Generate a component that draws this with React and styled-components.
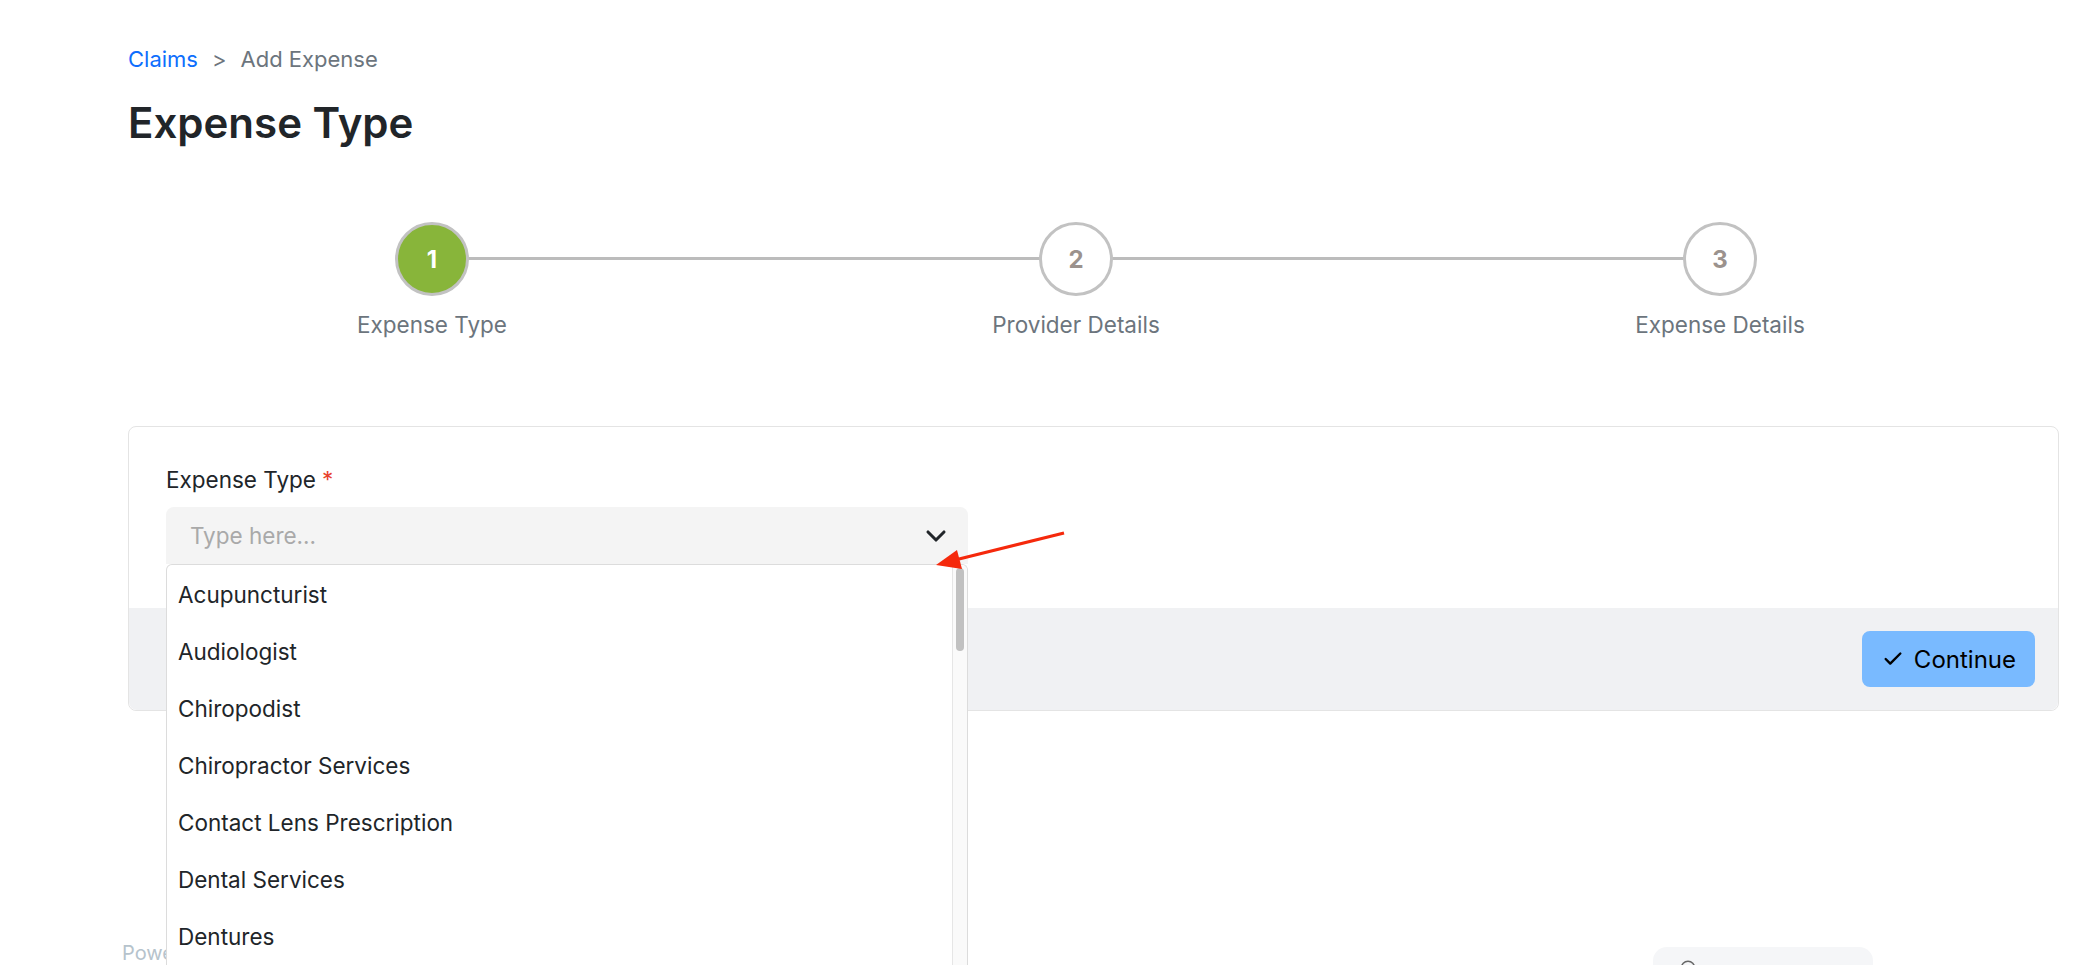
import React from "react";
import styled, { createGlobalStyle } from "styled-components";
import { Check, ChevronDown } from "lucide-react";

const GlobalStyle = createGlobalStyle`
  html, body {
    margin: 0;
    padding: 0;
    overflow: hidden;
    background: #fff;
  }
  body {
    font-family: Inter, "Noto Sans", sans-serif;
    color: #212529;
  }
  * {
    box-sizing: border-box;
  }
`;

const Page = styled.main`
  padding: 46px 36px 0 128px;
`;

const Breadcrumb = styled.nav`
  display: flex;
  align-items: center;
  gap: 14px;
  font-size: 22px;
  line-height: 26px;
  color: #6c757d;
`;

const Crumb = styled.a`
  color: #0d6efd;
  text-decoration: none;
`;

const Title = styled.h1`
  margin: 24px 0 0;
  font-size: 42px;
  line-height: 53px;
  font-weight: 600;
  color: #212529;
`;

const Stepper = styled.ol`
  list-style: none;
  margin: 73px 0 0 -18px;
  padding: 0;
  display: grid;
  grid-template-columns: repeat(3, 644px);
`;

const Step = styled.li`
  position: relative;
  display: flex;
  flex-direction: column;
  align-items: center;

  /* connector line to the next step */
  &:not(:last-child)::after {
    content: "";
    position: absolute;
    top: 35px;
    left: 50%;
    width: 100%;
    height: 3px;
    background: #bcbcbc;
    z-index: 0;
  }
`;

const Circle = styled.span`
  position: relative;
  z-index: 1;
  width: 74px;
  height: 74px;
  border-radius: 50%;
  border: 3px solid #c2c2c2;
  background: ${(p) => (p.$active ? "#88b53a" : "#fff")};
  color: ${(p) => (p.$active ? "#fff" : "#9b928d")};
  display: flex;
  align-items: center;
  justify-content: center;
  font-size: 24px;
  font-weight: 700;
`;

const StepLabel = styled.span`
  margin-top: 16px;
  font-size: 22.5px;
  line-height: 26px;
  color: #6c757d;
`;

const Card = styled.section`
  position: relative;
  margin-top: 88px;
  border: 1px solid #e4e4e4;
  border-radius: 8px;
  background: #fff;
`;

const CardBody = styled.div`
  padding: 39px 37px 44px;
`;

const Label = styled.label`
  display: block;
  font-size: 22.5px;
  line-height: 27px;
  color: #212529;
`;

const Required = styled.span`
  color: #e8412c;
  margin-left: 6px;
`;

const Field = styled.div`
  position: relative;
  width: 802px;
  margin-top: 14px;
`;

const Input = styled.input`
  display: block;
  width: 100%;
  height: 57px;
  border: none;
  border-radius: 8px 8px 0 0;
  background: #f4f4f4;
  padding: 0 60px 0 24px;
  font-family: inherit;
  font-size: 22.5px;
  color: #212529;
  outline: none;

  &::placeholder {
    color: #a9a9a9;
  }
`;

const Chevron = styled.span`
  position: absolute;
  right: 16px;
  top: 13px;
  display: flex;
  color: #212529;
`;

const Dropdown = styled.div`
  position: absolute;
  top: 100%;
  left: 0;
  width: 100%;
  height: 440px;
  z-index: 5;
  display: flex;
  background: #fff;
  border: 1px solid #dcdcdc;
  border-bottom: none;
  border-radius: 6px 6px 0 0;
  overflow: hidden;
`;

const OptionList = styled.ul`
  flex: 1;
  list-style: none;
  margin: 0;
  padding: 1px 0 0;
`;

const Option = styled.li`
  height: 57px;
  display: flex;
  align-items: center;
  padding-left: 11px;
  font-size: 22.5px;
  color: #212529;
`;

const ScrollTrack = styled.div`
  width: 15px;
  border-left: 1px solid #e6e6e6;
  background: #fafafa;
  padding: 3px 3px 0 3px;
`;

const ScrollThumb = styled.div`
  height: 83px;
  border-radius: 4px;
  background: #c1c1c1;
`;

const CardFooter = styled.div`
  display: flex;
  justify-content: flex-end;
  padding: 23px 23px 23px;
  background: #f0f1f3;
  border-radius: 0 0 8px 8px;
`;

const Button = styled.button`
  display: flex;
  align-items: center;
  gap: 10px;
  height: 56px;
  padding: 0 19px 0 20px;
  border: none;
  border-radius: 8px;
  background: #79baff;
  color: #000;
  font-family: inherit;
  font-size: 24px;
`;

const Annotation = styled.svg`
  position: absolute;
  left: 802px;
  top: 102px;
  z-index: 6;
  overflow: visible;
`;

const PageFooter = styled.footer`
  display: flex;
  justify-content: space-between;
  align-items: flex-start;
  margin: 230px 186px 0 -6px;
`;

const Powered = styled.span`
  font-size: 20px;
  line-height: 24px;
  color: #b6c3cc;
`;

const Widget = styled.div`
  margin-top: 6px;
  width: 220px;
  height: 50px;
  border-radius: 14px;
  background: #f5f6f8;
  padding: 12px 0 0 26px;
  color: #666;
`;

const options = [
  "Acupuncturist",
  "Audiologist",
  "Chiropodist",
  "Chiropractor Services",
  "Contact Lens Prescription",
  "Dental Services",
  "Dentures",
  "Dermatologist",
];

const steps = ["Expense Type", "Provider Details", "Expense Details"];

export default function App() {
  return (
    <>
      <GlobalStyle />
      <Page>
        <Breadcrumb>
          <Crumb href="#">Claims</Crumb>
          <span>&gt;</span>
          <span>Add Expense</span>
        </Breadcrumb>
        <Title>Expense Type</Title>

        <Stepper>
          {steps.map((s, i) => (
            <Step key={s}>
              <Circle $active={i === 0}>{i + 1}</Circle>
              <StepLabel>{s}</StepLabel>
            </Step>
          ))}
        </Stepper>

        <Card>
          <CardBody>
            <Label>
              Expense Type<Required>*</Required>
            </Label>
            <Field>
              <Input placeholder="Type here..." />
              <Chevron>
                <ChevronDown size={32} strokeWidth={2.3} />
              </Chevron>
              <Dropdown>
                <OptionList>
                  {options.map((o) => (
                    <Option key={o}>{o}</Option>
                  ))}
                </OptionList>
                <ScrollTrack>
                  <ScrollThumb />
                </ScrollTrack>
              </Dropdown>
            </Field>
          </CardBody>
          <CardFooter>
            <Button>
              <Check size={22} strokeWidth={2.6} />
              Continue
            </Button>
          </CardFooter>
          <Annotation width="136" height="44" viewBox="0 0 136 44">
            <line x1="133" y1="4" x2="24" y2="31" stroke="#f5290c" strokeWidth="3.2" />
            <polygon points="5,36 26,21 31,40" fill="#f5290c" />
          </Annotation>
        </Card>

        <PageFooter>
          <Powered>Powered by Claims</Powered>
          <Widget>
            <svg width="18" height="18" viewBox="0 0 24 24" fill="none" stroke="currentColor" strokeWidth="2">
              <circle cx="12" cy="12" r="9" />
            </svg>
          </Widget>
        </PageFooter>
      </Page>
    </>
  );
}
